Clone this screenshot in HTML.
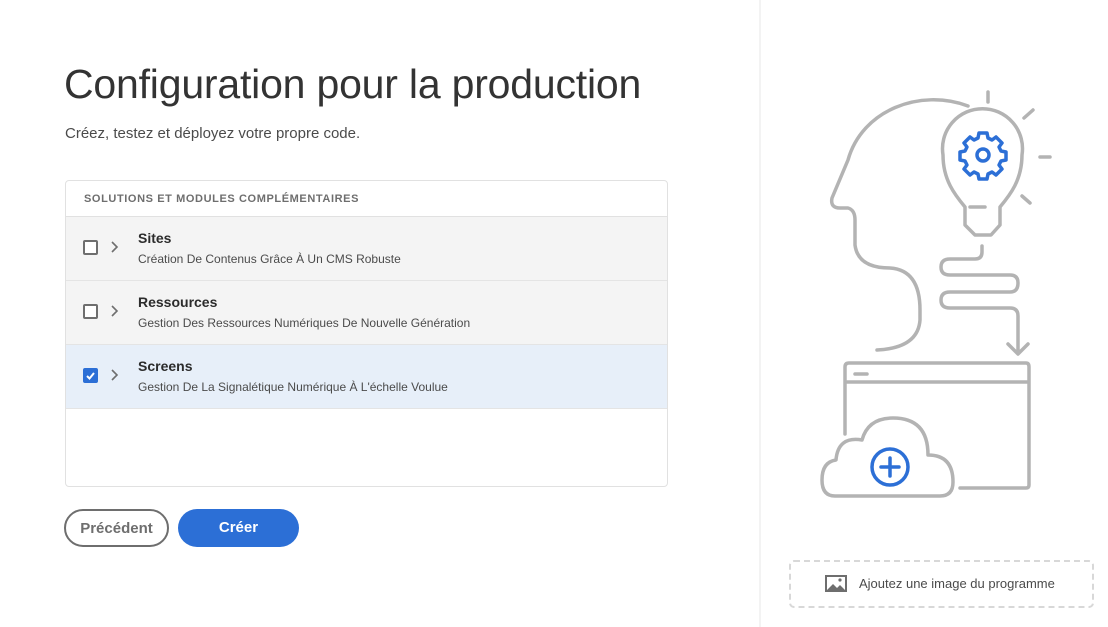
<!DOCTYPE html>
<html><head><meta charset="utf-8"><style>
*{box-sizing:border-box;margin:0;padding:0}
body{width:1108px;height:627px;background:#fff;font-family:"Liberation Sans",sans-serif;position:relative;overflow:hidden;color:#2c2c2c}
.a{position:absolute}
h1{position:absolute;left:64px;top:61px;font-size:41px;font-weight:normal;color:#333;letter-spacing:-0.2px}
.sub{left:65px;top:125px;font-size:15px;color:#4b4b4b}
.card{left:65px;top:180px;width:603px;height:307px;border:1px solid #e1e1e1;border-radius:4px;overflow:hidden}
.hd{height:36px;padding:12px 0 0 18px;font-size:11px;font-weight:bold;color:#6e6e6e;letter-spacing:0.6px;border-bottom:1px solid #e1e1e1}
.row{height:64px;background:#f4f4f4;border-bottom:1px solid #e4e4e4;position:relative}
.row.sel{background:#e7eff9}
.cb{position:absolute;left:17px;top:23px;width:15px;height:15px;border:2px solid #6e6e6e;border-radius:2px;background:#fff}
.sel .cb{background:#2c6fd6;border-color:#2c6fd6}
.ch{position:absolute;left:44px;top:24px}
.t{position:absolute;left:72px;top:13px;font-size:14px;font-weight:bold;color:#2c2c2c}
.d{position:absolute;left:72px;top:35px;font-size:12px;color:#4b4b4b}
.btn{top:509px;height:38px;border-radius:19px;font-size:15px;font-weight:bold;text-align:center;line-height:34px}
.right{left:759px;top:0;width:349px;height:627px;border-left:2px solid #f3f3f3}
.drop{left:789px;top:560px;width:305px;height:48px;border:2px dashed #d8d8d8;border-radius:5px;font-size:13px;color:#4b4b4b;line-height:44px;padding-left:68px}
</style></head><body>
<h1>Configuration pour la production</h1>
<div class="a sub">Créez, testez et déployez votre propre code.</div>
<div class="a card">
<div class="hd">SOLUTIONS ET MODULES COMPLÉMENTAIRES</div>
<div class="row"><div class="cb"></div><svg class="ch" width="10" height="12"><path d="M2 1l5 5-5 5" stroke="#6e6e6e" stroke-width="1.6" fill="none"/></svg><div class="t">Sites</div><div class="d">Création De Contenus Grâce À Un CMS Robuste</div></div>
<div class="row"><div class="cb"></div><svg class="ch" width="10" height="12"><path d="M2 1l5 5-5 5" stroke="#6e6e6e" stroke-width="1.6" fill="none"/></svg><div class="t">Ressources</div><div class="d">Gestion Des Ressources Numériques De Nouvelle Génération</div></div>
<div class="row sel"><div class="cb"><svg width="11" height="11" style="position:absolute;left:0;top:0"><path d="M2 6l2.5 2.5L9 3" stroke="#fff" stroke-width="2" fill="none"/></svg></div><svg class="ch" width="10" height="12"><path d="M2 1l5 5-5 5" stroke="#6e6e6e" stroke-width="1.6" fill="none"/></svg><div class="t">Screens</div><div class="d">Gestion De La Signalétique Numérique À L'échelle Voulue</div></div>
</div>
<div class="a btn" style="left:64px;width:105px;border:2px solid #6e6e6e;color:#6e6e6e;line-height:35px">Précédent</div>
<div class="a btn" style="left:178px;width:121px;background:#2c6fd6;color:#fff;line-height:38px">Créer</div>
<div class="a right"></div>
<svg class="a" style="left:0;top:0" width="1108" height="627" fill="none" stroke-linecap="round" stroke-linejoin="round">
<g stroke="#b3b3b3" stroke-width="3.5">
<path d="M968 106C920 88 862 110 848 160L832 198Q830 208 840 208L848 208Q855 210 855 220L855 245Q858 268 890 268Q920 270 920 310L920 320Q918 348 877 350"/>
<path d="M965 207C955 195 943 180 943 155A40 40 0 1 1 1022 155C1022 180 1010 195 1000 207L1000 225L991 235L975 235L965 225Z"/>
<path d="M970 207H985"/>
<path d="M988 92V102M1024 118L1033 110M1040 157H1050M1022 196L1030 203"/>
<path d="M982 246V252Q982 259 975 259H950Q941 259 941 267Q941 275 950 275H1010Q1018 275 1018 283Q1018 292 1010 292H950Q941 292 941 300Q941 308 950 308H1010Q1018 308 1018 316V353M1008 344L1018 354L1028 344"/>
<path d="M845 434V367Q845 363 849 363H1026Q1029 363 1029 367V485Q1029 488 1026 488H960M845 382H1029M855 374H867"/>
<path d="M835 496H940Q953 496 953 482Q953 455 928 455Q928 418 893 418Q868 418 862 440Q838 436 836 460Q822 462 822 480Q822 496 835 496Z"/>
</g>
<g stroke="#2c6fd6" stroke-width="3.5">
<path d="M979 133h8l1 5 4 2 4-3 6 6-3 4 2 4 5 1v8l-5 1-2 4 3 4-6 6-4-3-4 2-1 5h-8l-1-5-4-2-4 3-6-6 3-4-2-4-5-1v-8l5-1 2-4-3-4 6-6 4 3 4-2z"/>
<circle cx="983" cy="155" r="6"/>
<circle cx="890" cy="467" r="18"/>
<path d="M890 458V476M881 467H899"/>
</g>
</svg>
<div class="a drop">Ajoutez une image du programme</div>
<svg class="a" style="left:825px;top:575px" width="22" height="17"><rect x="1" y="1" width="20" height="15" fill="#fff" stroke="#6e6e6e" stroke-width="2"/><path d="M2 15L8 9l4 4 3-3 5 5z" fill="#6e6e6e"/><circle cx="15" cy="5" r="1.6" fill="#6e6e6e"/></svg>
</body></html>
